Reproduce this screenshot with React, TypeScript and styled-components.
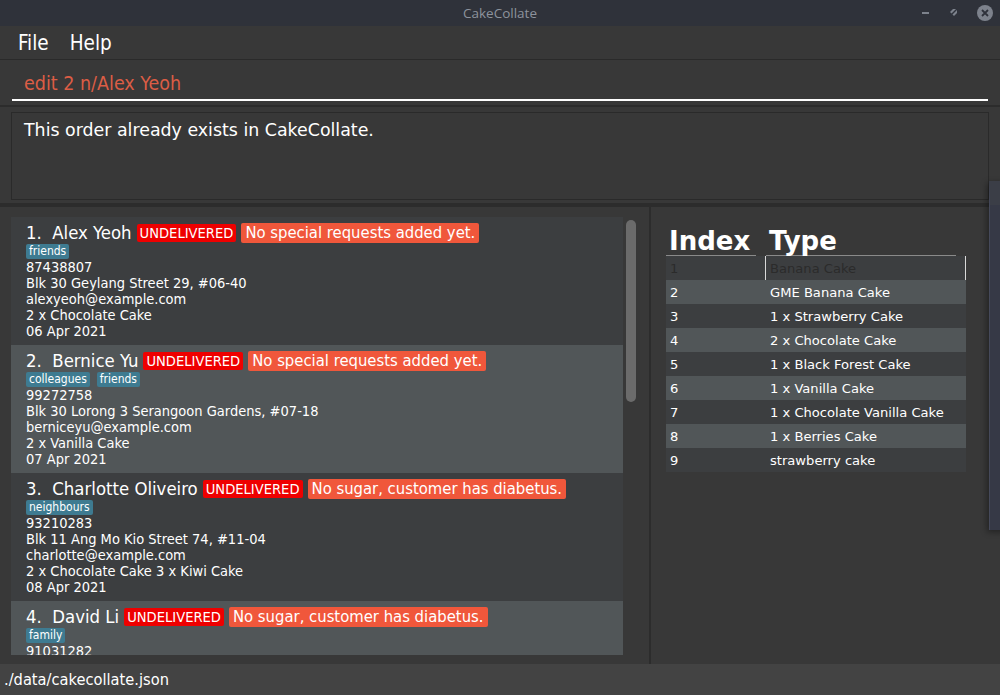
import styled, { createGlobalStyle } from "styled-components";

type Order = {
  name: string;
  status: string;
  request: string;
  tags: string[];
  phone: string;
  address: string;
  email: string;
  cakes: string;
  date: string;
};

const ORDERS: Order[] = [
  {
    name: "Alex Yeoh",
    status: "UNDELIVERED",
    request: "No special requests added yet.",
    tags: ["friends"],
    phone: "87438807",
    address: "Blk 30 Geylang Street 29, #06-40",
    email: "alexyeoh@example.com",
    cakes: "2 x Chocolate Cake",
    date: "06 Apr 2021",
  },
  {
    name: "Bernice Yu",
    status: "UNDELIVERED",
    request: "No special requests added yet.",
    tags: ["colleagues", "friends"],
    phone: "99272758",
    address: "Blk 30 Lorong 3 Serangoon Gardens, #07-18",
    email: "berniceyu@example.com",
    cakes: "2 x Vanilla Cake",
    date: "07 Apr 2021",
  },
  {
    name: "Charlotte Oliveiro",
    status: "UNDELIVERED",
    request: "No sugar, customer has diabetus.",
    tags: ["neighbours"],
    phone: "93210283",
    address: "Blk 11 Ang Mo Kio Street 74, #11-04",
    email: "charlotte@example.com",
    cakes: "2 x Chocolate Cake 3 x Kiwi Cake",
    date: "08 Apr 2021",
  },
  {
    name: "David Li",
    status: "UNDELIVERED",
    request: "No sugar, customer has diabetus.",
    tags: ["family"],
    phone: "91031282",
    address: "Blk 436 Serangoon Gardens Street 26, #16-43",
    email: "lidavid@example.com",
    cakes: "1 x Durian Cake",
    date: "09 Apr 2021",
  },
];

const CAKES = [
  "Banana Cake",
  "GME Banana Cake",
  "1 x Strawberry Cake",
  "2 x Chocolate Cake",
  "1 x Black Forest Cake",
  "1 x Vanilla Cake",
  "1 x Chocolate Vanilla Cake",
  "1 x Berries Cake",
  "strawberry cake",
];

const GlobalStyle = createGlobalStyle`
  html, body {
    margin: 0;
    padding: 0;
    background: #383838;
    overflow: hidden;
  }
  * { box-sizing: border-box; }
`;

const App = () => {
  return (
    <>
      <GlobalStyle />
      <Window>
        <TitleBar>
          <Title>CakeCollate</Title>
          <WindowButtons>
            <Minimize />
            <svg width="10" height="10" viewBox="0 0 10 10">
              <path d="M2 4 L5 1 L9 1 L9 5 L6 8 Z" fill="#7d828c" />
              <path d="M1 9 L9 1" stroke="#2f323b" strokeWidth="1.5" />
            </svg>
            <CloseButton>
              <svg width="8" height="8" viewBox="0 0 8 8">
                <path d="M1 1 L7 7 M7 1 L1 7" stroke="#2f323b" strokeWidth="1.8" />
              </svg>
            </CloseButton>
          </WindowButtons>
        </TitleBar>
        <MenuBar>
          <MenuItem>File</MenuItem>
          <MenuItem>Help</MenuItem>
        </MenuBar>
        <CommandPane>
          <CommandText>edit 2 n/Alex Yeoh</CommandText>
        </CommandPane>
        <ResultPane>
          <ResultBox>This order already exists in CakeCollate.</ResultBox>
        </ResultPane>
        <Main>
          <ListPane>
            <List>
              {ORDERS.map((o, i) => (
                <Card key={o.name} alt={i % 2 === 1}>
                  <NameRow>
                    <Name>
                      {i + 1}.&nbsp;&nbsp;{o.name}
                    </Name>
                    <Status>{o.status}</Status>
                    <Request>{o.request}</Request>
                  </NameRow>
                  <Tags>
                    {o.tags.map((t) => (
                      <Tag key={t}>{t}</Tag>
                    ))}
                  </Tags>
                  <Line>{o.phone}</Line>
                  <Line>{o.address}</Line>
                  <Line>{o.email}</Line>
                  <Line>{o.cakes}</Line>
                  <Line>{o.date}</Line>
                </Card>
              ))}
            </List>
            <ScrollTrack>
              <ScrollThumb />
            </ScrollTrack>
          </ListPane>
          <TablePane>
            <Table>
              <HeaderRow>
                <HeadCell width={100}>Index</HeadCell>
                <HeadCell width={200}>Type</HeadCell>
              </HeaderRow>
              {CAKES.map((c, i) => (
                <Row key={i} alt={i % 2 === 1} selected={i === 0}>
                  <IndexCell>{i + 1}</IndexCell>
                  <TypeCell selected={i === 0}>{c}</TypeCell>
                </Row>
              ))}
            </Table>
          </TablePane>
        </Main>
        <StatusBar>./data/cakecollate.json</StatusBar>
        <PeekWindow />
      </Window>
    </>
  );
};

const Window = styled.div`
  position: relative;
  width: 1000px;
  height: 695px;
  display: flex;
  flex-direction: column;
  background: #383838;
  color: #ffffff;
  overflow: hidden;
`;

const TitleBar = styled.div`
  height: 26px;
  flex-shrink: 0;
  background: #2f323a;
  display: flex;
  align-items: center;
  justify-content: center;
  position: relative;
`;

const Title = styled.div`
  font-family: "Open Sans", "DejaVu Sans", sans-serif;
  font-size: 13.5px;
  color: #8d929c;
`;

const WindowButtons = styled.div`
  position: absolute;
  right: 7px;
  top: 5px;
  display: flex;
  align-items: center;
  gap: 19px;
`;

const Minimize = styled.div`
  width: 7px;
  height: 2px;
  background: #7d828c;
`;

const CloseButton = styled.div`
  width: 16px;
  height: 16px;
  border-radius: 50%;
  background: #7d828c;
  display: flex;
  align-items: center;
  justify-content: center;
`;

const MenuBar = styled.div`
  height: 34px;
  flex-shrink: 0;
  display: flex;
  align-items: center;
  gap: 21px;
  padding-left: 18px;
  border-bottom: 1px solid #2a2a2a;
`;

const MenuItem = styled.span`
  font-family: "DejaVu Sans Condensed", "DejaVu Sans", sans-serif;
  font-size: 20.5px;
  color: #ffffff;
`;

const CommandPane = styled.div`
  height: 47px;
  flex-shrink: 0;
  padding: 0 12px 4px;
  display: flex;
  border-bottom: 2px solid #2c2c2c;
`;

const CommandText = styled.div`
  flex: 1;
  border-bottom: 2px solid #ffffff;
  padding: 12px 0 0 12px;
  font-family: "DejaVu Sans Condensed", "DejaVu Sans", sans-serif;
  font-size: 19.5px;
  color: #dc5d45;
`;

const ResultPane = styled.div`
  height: 100px;
  flex-shrink: 0;
  padding: 5px 11px 3px 11px;
  border-bottom: 4px solid #2c2c2c;
`;

const ResultBox = styled.div`
  height: 88px;
  border: 1px solid #2a2a2a;
  padding: 7px 12px;
  font-family: "DejaVu Sans", sans-serif;
  font-size: 17.4px;
  color: #ffffff;
`;

const Main = styled.div`
  flex: 1;
  display: flex;
  min-height: 0;
`;

const ListPane = styled.div`
  width: 651px;
  display: flex;
  padding: 10px 0 9px 11px;
  border-right: 2px solid #2c2c2c;
`;

const List = styled.div`
  width: 613px;
  overflow: hidden;
  background: #3c3e40;
`;

const Card = styled.div<{ alt: boolean }>`
  height: 128px;
  flex-shrink: 0;
  padding: 5px 15px 0;
  background: ${(p) => (p.alt ? "#515658" : "#3c3e40")};
  font-family: "DejaVu Sans Condensed", "DejaVu Sans", sans-serif;
`;

const NameRow = styled.div`
  display: flex;
  align-items: center;
  gap: 5px;
  height: 21px;
`;

const Name = styled.span`
  font-size: 18.4px;
  color: #ffffff;
`;

const Status = styled.span`
  background: #ee0000;
  color: #ffffff;
  font-size: 14.6px;
  line-height: 18px;
  padding: 0 3px;
  border-radius: 2px;
`;

const Request = styled.span`
  background: #f0573b;
  color: #ffffff;
  font-size: 16.5px;
  line-height: 20px;
  padding: 0 4px;
  border-radius: 2px;
`;

const Tags = styled.div`
  display: flex;
  gap: 7px;
  height: 16px;
  align-items: center;
`;

const Tag = styled.span`
  background: #3e7b91;
  color: #ffffff;
  font-size: 12px;
  padding: 0 3px;
  border-radius: 2px;
  line-height: 15px;
`;

const Line = styled.div`
  font-size: 14.5px;
  line-height: 16px;
  color: #ffffff;
  white-space: nowrap;
`;

const ScrollTrack = styled.div`
  width: 26px;
  padding: 3px 0 0 3px;
`;

const ScrollThumb = styled.div`
  width: 10px;
  height: 182px;
  border-radius: 5px;
  background: #6b6b6b;
`;

const TablePane = styled.div`
  flex: 1;
  padding: 20px 0 0 15px;
`;

const Table = styled.div`
  width: 300px;
  font-family: "DejaVu Sans", sans-serif;
`;

const HeaderRow = styled.div`
  display: flex;
  height: 29px;
`;

const HeadCell = styled.div<{ width: number }>`
  width: ${(p) => p.width - 10}px;
  margin-right: 10px;
  border-bottom: 1px solid #8a8a8a;
  font-size: 26px;
  font-weight: bold;
  line-height: 28px;
  padding-left: 3px;
  color: #ffffff;
`;

const Row = styled.div<{ alt: boolean; selected: boolean }>`
  display: flex;
  height: 24px;
  align-items: center;
  background: ${(p) => (p.alt ? "#515658" : "#3c3e40")};
  font-size: 13.1px;
  color: ${(p) => (p.selected ? "#2b2b2b" : "#ffffff")};
`;

const IndexCell = styled.div`
  width: 99px;
  padding-left: 4px;
`;

const TypeCell = styled.div<{ selected: boolean }>`
  flex: 1;
  height: 100%;
  display: flex;
  align-items: center;
  padding-left: 4px;
  border-left: 1px solid ${(p) => (p.selected ? "#d8d8d8" : "transparent")};
  border-right: 1px solid ${(p) => (p.selected ? "#d8d8d8" : "transparent")};
`;

const StatusBar = styled.div`
  height: 31px;
  flex-shrink: 0;
  background: #434343;
  padding: 6px 0 0 4px;
  font-family: "DejaVu Sans Condensed", "DejaVu Sans", sans-serif;
  font-size: 16.3px;
  color: #ffffff;
`;

const PeekWindow = styled.div`
  position: absolute;
  left: 989px;
  top: 181px;
  width: 20px;
  height: 349px;
  background: #363946;
  border-top: 24px solid #3b3e47;
  border-left: 1px solid #45495a;
  box-shadow: -2px 2px 6px rgba(0, 0, 0, 0.4);
`;

export default App;
